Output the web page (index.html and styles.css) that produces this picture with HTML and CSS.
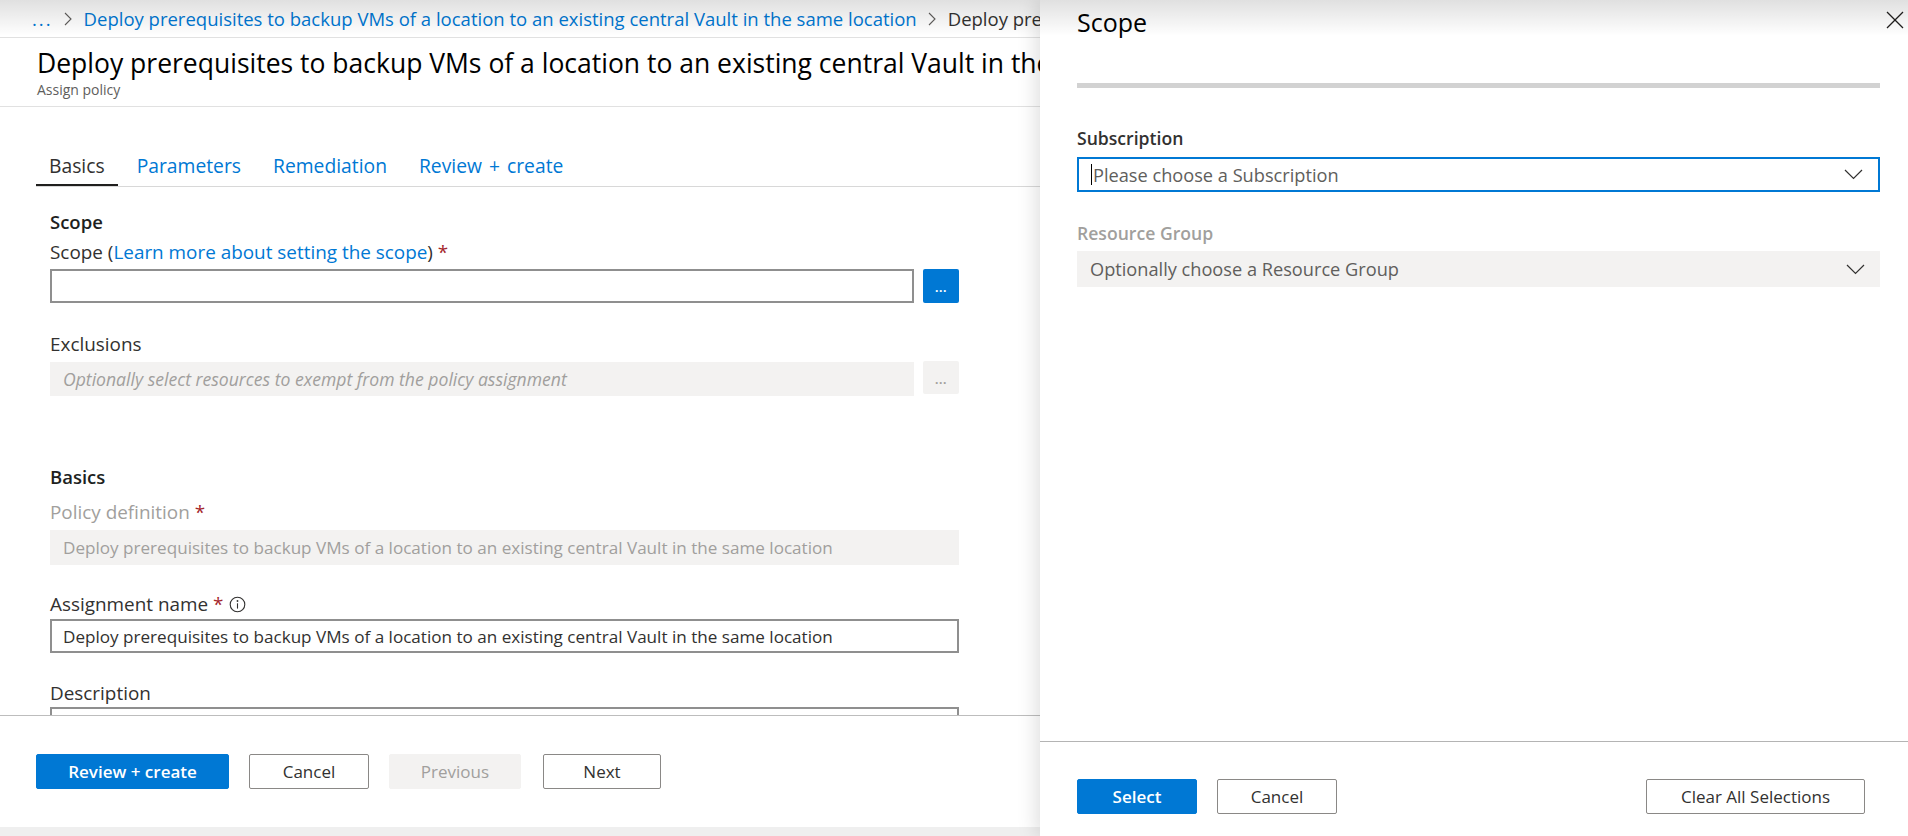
FILE: index.html
```html
<!DOCTYPE html>
<html lang="en">
<head>
<meta charset="utf-8">
<title>Assign policy</title>
<link rel="stylesheet" href="styles.css">
</head>
<body>
<div class="topshade"></div>

<div class="blade">
  <nav class="crumbs">
    <span class="dots">...</span>
    <svg class="chev" width="8" height="14" viewBox="0 0 8 14"><polyline points="1,1 7,7 1,13" fill="none" stroke="#605e5c" stroke-width="1.1"/></svg>
    <a class="crumb-link">Deploy prerequisites to backup VMs of a location to an existing central Vault in the same location</a>
    <svg class="chev" width="8" height="14" viewBox="0 0 8 14"><polyline points="1,1 7,7 1,13" fill="none" stroke="#605e5c" stroke-width="1.1"/></svg>
    <span class="crumb-current">Deploy prerequisites to backup VMs of a location to an existing central Vault in the same location</span>
  </nav>

  <header class="head">
    <h1 class="title">Deploy prerequisites to backup VMs of a location to an existing central Vault in the same location</h1>
    <div class="sub">Assign policy</div>
  </header>

  <div class="tabs">
    <a class="tab active">Basics</a>
    <a class="tab">Parameters</a>
    <a class="tab">Remediation</a>
    <a class="tab">Review + create</a>
  </div>

  <main class="form">
    <div class="form-inner">
      <h2 class="section">Scope</h2>
      <div class="label lbl-first">Scope (<a class="link">Learn more about setting the scope</a>) <span class="req">*</span></div>
      <div class="input-row row-scope">
        <div class="input"></div>
        <div class="pick-btn primary"><span class="pick-dots">...</span></div>
      </div>

      <div class="label lbl-excl">Exclusions</div>
      <div class="input-row row-excl">
        <div class="input disabled italic">Optionally select resources to exempt from the policy assignment</div>
        <div class="pick-btn muted"><span class="pick-dots">...</span></div>
      </div>

      <h2 class="section sec-basics">Basics</h2>
      <div class="label dim lbl-policy">Policy definition <span class="req">*</span></div>
      <div class="input readonly in-policy">Deploy prerequisites to backup VMs of a location to an existing central Vault in the same location</div>

      <div class="label lbl-assign">Assignment name <span class="req">*</span>
        <svg class="info" width="17" height="17" viewBox="0 0 17 17"><circle cx="8.5" cy="8.5" r="7.3" fill="none" stroke="#323130" stroke-width="1.1"/><circle cx="8.5" cy="5" r="0.9" fill="#323130"/><line x1="8.5" y1="7.3" x2="8.5" y2="12.6" stroke="#323130" stroke-width="1.1"/></svg>
      </div>
      <div class="input in-assign">Deploy prerequisites to backup VMs of a location to an existing central Vault in the same location</div>

      <div class="label lbl-desc">Description</div>
      <div class="input textarea"></div>
    </div>
  </main>

  <footer class="foot">
    <button class="btn primary w-review">Review + create</button>
    <button class="btn outline w-cancel">Cancel</button>
    <button class="btn disabled-btn w-prev">Previous</button>
    <button class="btn outline w-next">Next</button>
  </footer>
  <div class="bottombar"></div>
</div>

<aside class="panel">
  <div class="panel-head">
    <h2 class="panel-title">Scope</h2>
    <svg class="close" width="18" height="18" viewBox="0 0 18 18"><line x1="1" y1="1" x2="17" y2="17" stroke="#201f1e" stroke-width="1.2"/><line x1="17" y1="1" x2="1" y2="17" stroke="#201f1e" stroke-width="1.2"/></svg>
    <div class="progress"></div>
  </div>
  <div class="panel-body">
    <div class="plabel">Subscription</div>
    <div class="select focused">
      <span class="caret"></span><span class="placeholder">Please choose a Subscription</span>
      <svg class="dd" width="19" height="11" viewBox="0 0 19 11"><polyline points="1,1 9.5,9.5 18,1" fill="none" stroke="#323130" stroke-width="1.2"/></svg>
    </div>
    <div class="plabel dim rg-label">Resource Group</div>
    <div class="select muted-select">
      <span class="placeholder">Optionally choose a Resource Group</span>
      <svg class="dd" width="19" height="11" viewBox="0 0 19 11"><polyline points="1,1 9.5,9.5 18,1" fill="none" stroke="#323130" stroke-width="1.2"/></svg>
    </div>
  </div>
  <div class="panel-foot">
    <button class="btn primary w-select">Select</button>
    <button class="btn outline w-pcancel">Cancel</button>
    <button class="btn outline w-clear">Clear All Selections</button>
  </div>
</aside>
</body>
</html>
```

FILE: styles.css
```css
* { box-sizing: border-box; }

html, body { margin: 0; padding: 0; }

body {
  width: 1908px;
  height: 836px;
  overflow: hidden;
  position: relative;
  background: #ffffff;
  color: #323130;
  font-family: "Open Sans", "Noto Sans", "Liberation Sans", sans-serif;
}

.topshade {
  position: absolute;
  left: 0;
  top: 0;
  right: 0;
  height: 36px;
  background: linear-gradient(rgba(0, 0, 0, 0.12), rgba(0, 0, 0, 0));
  pointer-events: none;
  z-index: 5;
}

/* ---------- left blade ---------- */
.blade {
  width: 1040px;
  height: 836px;
  overflow: hidden;
  display: flex;
  flex-direction: column;
}

.crumbs {
  height: 38px;
  flex: none;
  border-bottom: 1px solid #e1e1e1;
  display: flex;
  align-items: center;
  padding-left: 32px;
  font-size: 18.5px;
  white-space: nowrap;
  overflow: hidden;
}

.dots { color: #0078d4; letter-spacing: 2px; }
.chev { flex: none; margin: 1px 12px 0 11px; }
.crumb-link { color: #0078d4; }
.crumb-current { color: #323130; }

.head {
  flex: none;
  padding: 10px 0 7px 37px;
  border-bottom: 1px solid #e1e1e1;
  white-space: nowrap;
  overflow: hidden;
}

.title {
  margin: 0;
  font-size: 26.5px;
  line-height: 30px;
  font-weight: 400;
  color: #000000;
}

.sub {
  margin-top: 3px;
  font-size: 14px;
  line-height: 18px;
  color: #605e5c;
}

.tabs {
  flex: none;
  display: flex;
  gap: 6px;
  margin: 47px 0 0 36px;
  border-bottom: 1px solid #d8d8d8;
}

.tab {
  padding: 0 13px 6px;
  font-size: 19.3px;
  line-height: 24px;
  word-spacing: 2px;
  color: #0078d4;
  border-bottom: 2px solid transparent;
}

.tab.active {
  color: #323130;
  border-bottom-color: #201f1e;
}

.form {
  flex: 1;
  overflow: hidden;
  padding: 23px 0 0 50px;
}

.form-inner { width: 909px; }

.section {
  margin: 0;
  font-size: 18.5px;
  line-height: 24px;
  font-weight: 600;
  color: #201f1e;
}

.sec-basics { margin-top: 69px; }

.label {
  font-size: 18.9px;
  line-height: 22px;
  color: #323130;
  display: flex;
  align-items: center;
  white-space: pre;
}

.label.dim { color: #a19f9d; }
.lbl-first { margin-top: 7px; }
.lbl-excl { margin-top: 30px; }
.lbl-policy { margin-top: 12px; }
.lbl-assign { margin-top: 28px; }
.lbl-desc { margin-top: 29px; }

.link { color: #0078d4; }
.req { color: #a4262c; }
.info { margin-left: 6px; }

.input-row {
  display: flex;
  align-items: center;
  gap: 9px;
}

.row-scope { margin-top: 6px; }
.row-excl { margin-top: 7px; }

.input {
  height: 34px;
  border: 2px solid #8f8f8f;
  padding: 0 11px;
  display: flex;
  align-items: center;
  font-size: 17.1px;
  color: #323130;
  white-space: nowrap;
  overflow: hidden;
}

.input-row .input { width: 864px; flex: none; }

.input.disabled {
  border-color: #f3f2f1;
  background: #f3f2f1;
  color: #a19f9d;
}

.input.italic { font-style: italic; font-size: 17.6px; }

.input.readonly {
  height: 35px;
  border-color: #f3f2f1;
  background: #f3f2f1;
  color: #a19f9d;
}

.in-policy { margin-top: 7px; }
.in-assign { margin-top: 4px; }

.textarea {
  margin-top: 3px;
  height: 80px;
}

.pick-btn {
  width: 36px;
  height: 34px;
  border-radius: 2px;
  display: flex;
  align-items: center;
  justify-content: center;
}

.pick-btn.primary { background: #0078d4; color: #ffffff; }
.pick-btn.muted { background: #f3f2f1; color: #a19f9d; height: 33px; margin-top: -3px; }

.pick-dots {
  font-size: 12px;
  font-weight: 700;
  letter-spacing: 0.5px;
  line-height: 12px;
  margin-top: 4px;
}

/* ---------- footers / buttons ---------- */
.foot {
  flex: none;
  height: 112px;
  border-top: 1px solid #bdbdbd;
  padding: 38px 0 0 36px;
  display: flex;
  align-items: flex-start;
  gap: 20px;
}

.bottombar {
  flex: none;
  height: 9px;
  background: #efefef;
}

.btn {
  height: 35px;
  border-radius: 2px;
  font-family: inherit;
  font-size: 17px;
  padding: 0;
  display: flex;
  align-items: center;
  justify-content: center;
  cursor: default;
}

.btn.primary {
  background: #0078d4;
  border: 1px solid #0078d4;
  color: #ffffff;
  font-weight: 600;
}

.btn.outline {
  background: #ffffff;
  border: 1px solid #8a8886;
  color: #323130;
  font-weight: 400;
}

.btn.disabled-btn {
  background: #f3f2f1;
  border: 1px solid #f3f2f1;
  color: #a19f9d;
  font-weight: 400;
}

.w-review { width: 193px; }
.w-cancel { width: 120px; }
.w-prev { width: 132px; }
.w-next { width: 118px; margin-left: 2px; }

/* ---------- right panel ---------- */
.panel {
  position: absolute;
  top: 0;
  right: 0;
  width: 868px;
  height: 836px;
  background: #ffffff;
  box-shadow: -4px 0 18px rgba(0, 0, 0, 0.13);
  display: flex;
  flex-direction: column;
  z-index: 2;
}

.panel-head {
  position: relative;
  flex: none;
  padding: 6px 28px 0 37px;
}

.panel-title {
  margin: 0;
  font-size: 25px;
  line-height: 32px;
  font-weight: 400;
  color: #000000;
}

.close {
  position: absolute;
  right: 4px;
  top: 11px;
}

.progress {
  margin-top: 45px;
  height: 5px;
  background: #d2d2d2;
}

.panel-body {
  flex: 1;
  padding: 0 28px 0 37px;
}

.plabel {
  margin-top: 39px;
  font-size: 17.6px;
  line-height: 22px;
  font-weight: 600;
  color: #323130;
}

.plabel.dim { color: #a19f9d; }
.rg-label { margin-top: 30px; }

.select {
  margin-top: 8px;
  height: 35px;
  display: flex;
  align-items: center;
  padding: 0 15px 0 12px;
  font-size: 18.2px;
  color: #605e5c;
}

.select.focused { border: 2px solid #0078d4; padding-left: 12px; }
.select.muted-select { margin-top: 7px; height: 36px; background: #f3f2f1; padding-left: 13px; }

.caret {
  width: 1px;
  height: 21px;
  background: #000000;
  margin-right: 1px;
}

.placeholder { flex: 1; white-space: nowrap; }

.dd { flex: none; }

.panel-foot {
  flex: none;
  height: 95px;
  border-top: 1px solid #b4b4b4;
  padding: 37px 43px 0 37px;
  display: flex;
  align-items: flex-start;
  gap: 20px;
}

.w-select { width: 120px; }
.w-pcancel { width: 120px; }
.w-clear { width: 219px; margin-left: auto; }
```
